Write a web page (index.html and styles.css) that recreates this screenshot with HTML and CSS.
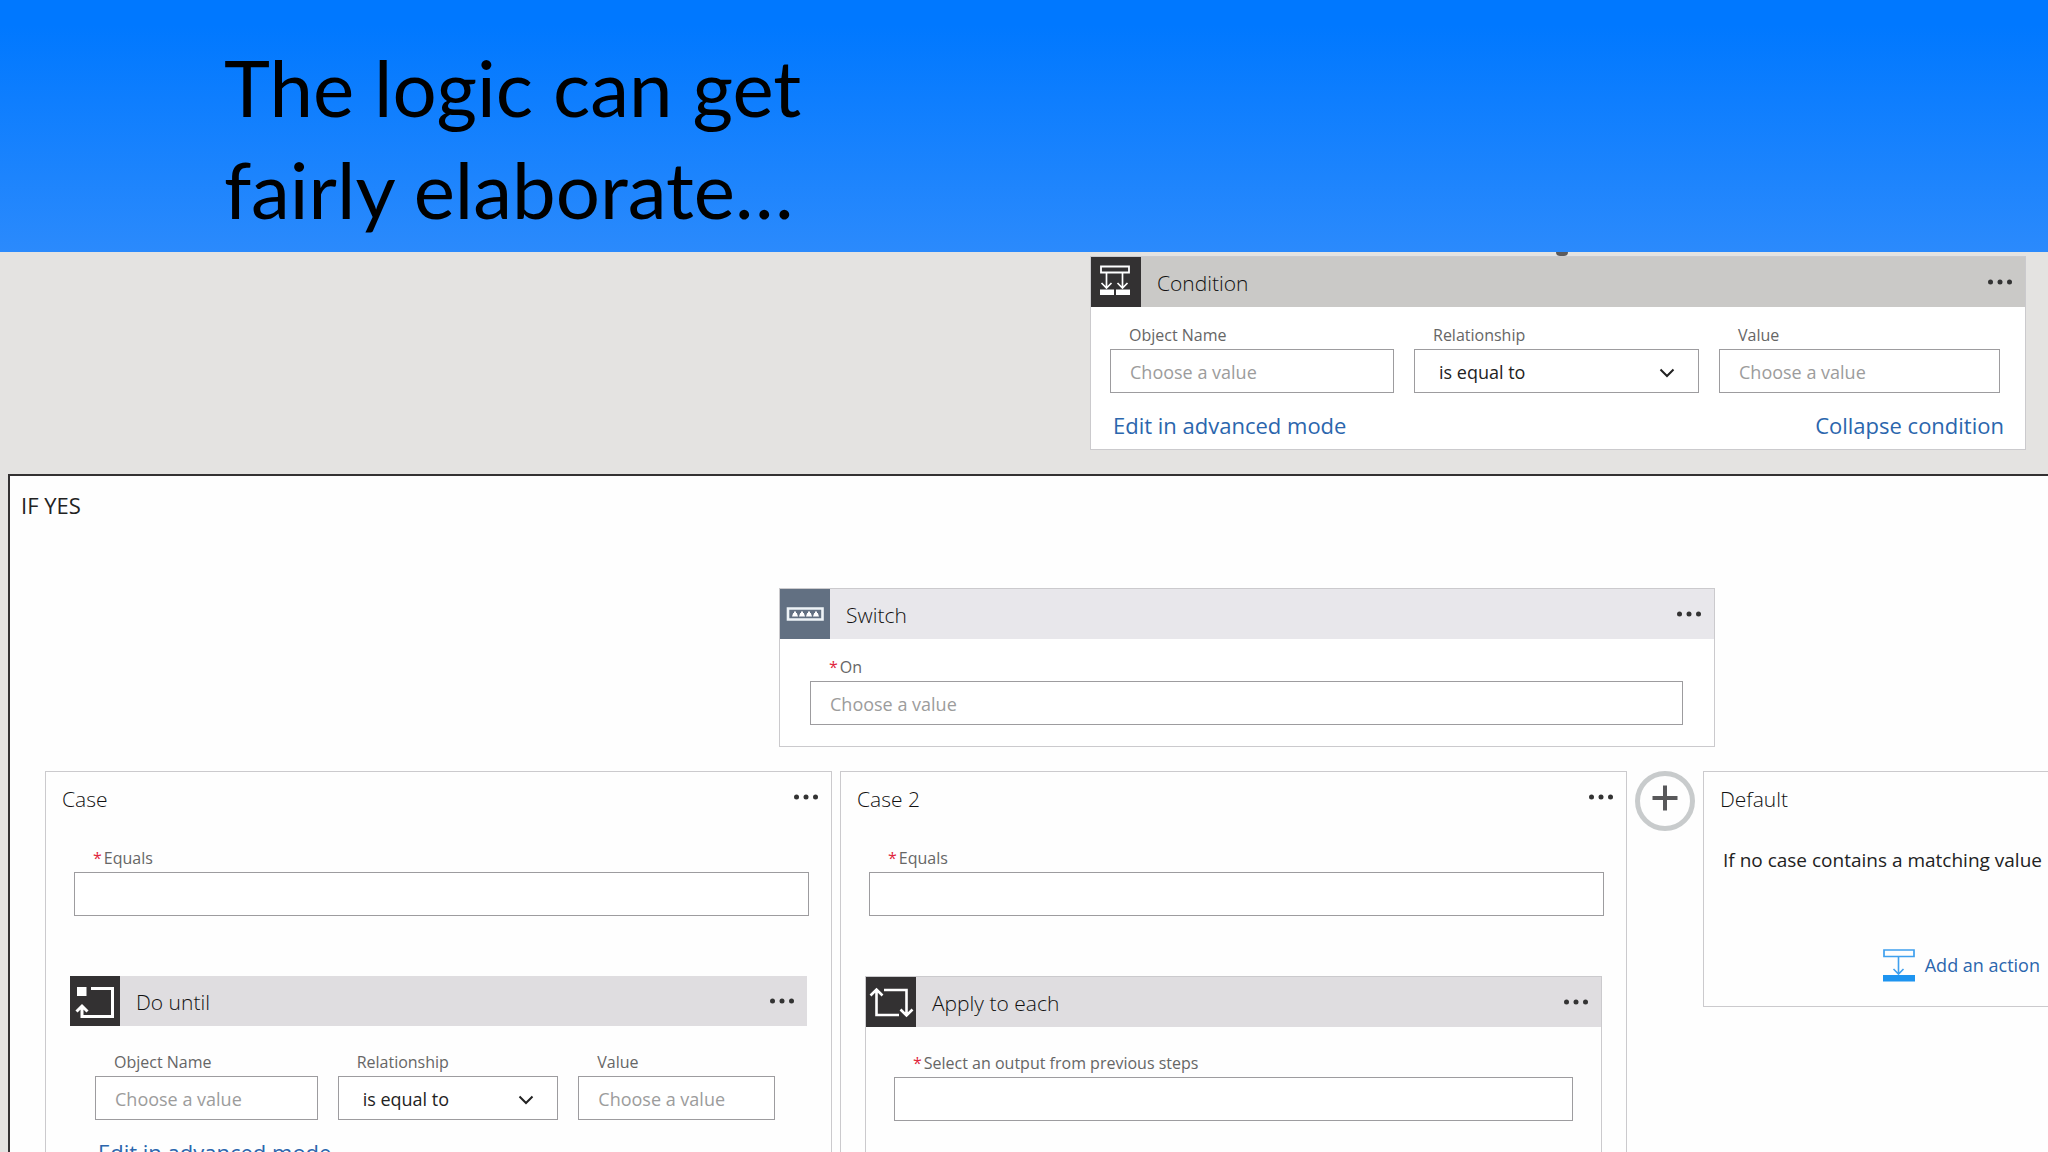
FILE: index.html
```html
<!DOCTYPE html>
<html lang="en">
<head>
<meta charset="utf-8">
<title>The logic can get fairly elaborate…</title>
<link rel="stylesheet" href="styles.css">
</head>
<body>
<svg class="sprite" aria-hidden="true">
  <symbol id="dots" viewBox="0 0 26 8"><circle cx="3.5" cy="4" r="2.5"/><circle cx="13" cy="4" r="2.5"/><circle cx="22.5" cy="4" r="2.5"/></symbol>
  <symbol id="chevron" viewBox="0 0 16 10"><path d="M1.5 1.5 8 8l6.500-6.500" fill="none" stroke="#222" stroke-width="2"/></symbol>
</svg>

<header class="banner">
  <h1 class="banner-title">The logic can get<br>fairly elaborate…</h1>
</header>

<main class="canvas">
  <section class="card condition">
    <div class="card-head head-condition">
      <span class="badge badge-dark">
        <svg width="50" height="50" viewBox="0 0 50 50" fill="none" stroke="#fff"><path d="M10 9.500h28v6H10z" stroke-width="1.800"/><path d="M15.500 16v14M31.500 16v14M10.500 26l5 5 5-5M26.500 26l5 5 5-5" stroke-width="1.700"/><path d="M9 32.500h14V38H9zM25 32.500h14V38H25z" fill="#fff" stroke="none"/></svg>
      </span>
      <h2 class="title">Condition</h2>
      <button class="more" aria-label="Condition menu"><svg width="26" height="8"><use href="#dots"/></svg></button>
    </div>
    <div class="card-body">
      <div class="fields">
        <div class="field"><label for="c-obj">Object Name</label><input id="c-obj" placeholder="Choose a value"></div>
        <div class="field"><label for="c-rel">Relationship</label><div class="pick"><select id="c-rel"><option>is equal to</option></select><svg class="arrow" width="16" height="10"><use href="#chevron"/></svg></div></div>
        <div class="field"><label for="c-val">Value</label><input id="c-val" placeholder="Choose a value"></div>
      </div>
      <div class="links"><a href="#">Edit in advanced mode</a><a href="#">Collapse condition</a></div>
    </div>
  </section>

  <section class="branch">
    <h2 class="branch-title">IF YES</h2>

    <section class="card switch">
      <div class="card-head head-switch">
        <span class="badge badge-slate">
          <svg width="50" height="50" viewBox="0 0 50 50"><path d="M8 19.500h34.500v11H8z" fill="none" stroke="#eef3f7" stroke-width="2.600"/><path d="M12 27.500l1.200-3.500h.8v-1.500h2V24h.8l1.200 3.500zM19 27.500l1.200-3.500h.8v-1.500h2V24h.8l1.200 3.500zM26 27.500l1.200-3.500h.8v-1.500h2V24h.8l1.200 3.500zM33 27.500l1.200-3.500h.8v-1.500h2V24h.8l1.200 3.500z" fill="#fff"/></svg>
        </span>
        <h3 class="title">Switch</h3>
        <button class="more" aria-label="Switch menu"><svg width="26" height="8"><use href="#dots"/></svg></button>
      </div>
      <div class="switch-body">
        <div class="field"><label for="s-on"><span class="req">*</span>On</label><input id="s-on" placeholder="Choose a value"></div>
      </div>
    </section>

    <div class="lanes">
      <section class="lane">
        <div class="lane-head">
          <h3 class="title">Case</h3>
          <button class="more" aria-label="Case menu"><svg width="26" height="8"><use href="#dots"/></svg></button>
        </div>
        <div class="field equals"><label for="e-1"><span class="req">*</span>Equals</label><input id="e-1"></div>
        <section class="step">
          <div class="card-head head-step">
            <span class="badge badge-dark">
              <svg width="50" height="50" viewBox="0 0 50 50"><path d="M7 11h9.500v9H7z" fill="#fff"/><path d="M21 12.500h21.500v28H12V30M6.500 35.500l5.500-5.500 5.500 5.500" fill="none" stroke="#fff" stroke-width="3"/></svg>
            </span>
            <h4 class="title">Do until</h4>
            <button class="more" aria-label="Do until menu"><svg width="26" height="8"><use href="#dots"/></svg></button>
          </div>
          <div class="until-body">
            <div class="fields fields-until">
              <div class="field"><label for="u-obj">Object Name</label><input id="u-obj" placeholder="Choose a value"></div>
              <div class="field"><label for="u-rel">Relationship</label><div class="pick"><select id="u-rel"><option>is equal to</option></select><svg class="arrow" width="16" height="10"><use href="#chevron"/></svg></div></div>
              <div class="field"><label for="u-val">Value</label><input id="u-val" placeholder="Choose a value"></div>
            </div>
            <div class="links"><a href="#">Edit in advanced mode</a></div>
          </div>
        </section>
      </section>

      <section class="lane">
        <div class="lane-head">
          <h3 class="title">Case 2</h3>
          <button class="more" aria-label="Case 2 menu"><svg width="26" height="8"><use href="#dots"/></svg></button>
        </div>
        <div class="field equals"><label for="e-2"><span class="req">*</span>Equals</label><input id="e-2"></div>
        <section class="step step-outlined">
          <div class="card-head head-step">
            <span class="badge badge-dark">
              <svg width="50" height="50" viewBox="0 0 50 50" fill="none" stroke="#fff" stroke-width="2.600"><path d="M18 13h22.500v24M34.500 32.500l6 6 6-6M33 38H10.500V14M4.500 18.500l6-6 6 6"/></svg>
            </span>
            <h4 class="title">Apply to each</h4>
            <button class="more" aria-label="Apply to each menu"><svg width="26" height="8"><use href="#dots"/></svg></button>
          </div>
          <div class="each-body">
            <div class="field"><label for="a-out"><span class="req">*</span>Select an output from previous steps</label><input id="a-out"></div>
          </div>
        </section>
      </section>

      <button class="add-case" aria-label="Add case"><svg width="60" height="60" viewBox="0 0 60 60" fill="none"><circle cx="30" cy="30" r="27.500" stroke="#c8cbcc" stroke-width="5"/><path d="M17.500 27h25M30 14.500v25" stroke="#58585a" stroke-width="4"/></svg></button>

      <section class="lane lane-default">
        <div class="lane-head"><h3 class="title">Default</h3></div>
        <p class="note">If no case contains a matching value</p>
        <a class="add-action" href="#">
          <svg width="32" height="34" viewBox="0 0 32 34" fill="none" stroke="#3fa0ee"><path d="M1 2h30v6.500H1z" stroke-width="1.700"/><path d="M15.500 9v17M10.500 21l5 5 5-5" stroke-width="1.600"/><path d="M0 27h32v6.500H0z" fill="#1d94f0" stroke="none"/></svg>
          Add an action
        </a>
      </section>
    </div>
  </section>
</main>
</body>
</html>
```
FILE: styles.css
```css
* { box-sizing: border-box; }

body {
  margin: 0;
  height: 100vh;
  display: flex;
  flex-direction: column;
  overflow: hidden;
  background: #e4e3e1;
  color: #222;
  font-family: "Open Sans", "Noto Sans", sans-serif;
  font-size: 18px;
}

h1, h2, h3, h4, p { margin: 0; font-weight: 400; }
a { color: #2b66ad; text-decoration: none; }
button { padding: 0; border: 0; background: none; color: inherit; font: inherit; }
svg { display: block; }
.sprite { position: absolute; width: 0; height: 0; }

.banner {
  flex: none;
  padding: 36px 224px 12px;
  background: linear-gradient(#0078ff 10%, #2b8afc);
}
.banner-title {
  color: #000;
  font: 400 78px/102px Lato, sans-serif;
}

.canvas {
  flex: 1;
  min-height: 0;
  display: flex;
  flex-direction: column;
  padding: 4px 0 0 8px;
}

.card {
  width: 936px;
  max-width: 100%;
  border: 1px solid #cbcacd;
  background: #fff;
}
.card-head {
  display: flex;
  align-items: center;
  height: 50px;
  padding-right: 12px;
}
.head-condition { background: #cac9c7; }
.head-switch { background: #e8e7eb; }
.head-step { background: #dfdde0; }
.badge { flex: none; width: 50px; height: 50px; margin-right: 16px; }
.badge-dark { background: #333132; }
.badge-slate { background: #627082; }
.title { flex: 1; padding-top: 2px; font-size: 21px; font-weight: 300; line-height: 30px; color: #111; }
.more { flex: none; fill: #333; }

/* Stub of the incoming connector above the condition */
.condition { position: relative; flex: none; align-self: flex-end; margin-right: 22px; }
.condition::before {
  content: "";
  position: absolute;
  top: -5px;
  left: 465px;
  width: 12px;
  height: 4px;
  border-radius: 0 0 6px 6px;
  background: #5c5b5c;
}

.card-body { padding: 16px 25px 9px 19px; }
.fields { display: grid; grid-template-columns: 284fr 285fr 281fr; gap: 20px; }
.fields-until { grid-template-columns: 223fr 221fr 197fr; }
.field { display: flex; flex-direction: column; gap: 2px; min-width: 0; }
.field label { padding-left: 19px; font-size: 16px; line-height: 24px; color: #666; }
.req { margin-right: 2px; color: #e0263c; }

input, select {
  width: 100%;
  height: 44px;
  padding: 2px 19px 0;
  border: 1px solid #9d9c9f;
  border-radius: 0;
  background: #fff;
  color: #222;
  font: inherit;
}
input::placeholder { color: #9c9c9c; opacity: 1; }
select { appearance: none; padding-left: 24px; }
.pick { position: relative; }
.arrow { position: absolute; top: 19px; right: 24px; pointer-events: none; }

.links {
  display: flex;
  justify-content: space-between;
  margin: 17px -4px 0 3px;
  font-size: 22px;
  line-height: 30px;
}

.branch {
  flex: 1;
  min-height: 0;
  margin-top: 24px;
  border: solid #333132;
  border-width: 2px 0 0 2px;
  background: #fefefe;
  overflow: hidden;
}
.branch-title { padding: 14px 11px 0; font-size: 22px; line-height: 30px; }

.switch { margin: 68px 333px 24px auto; }
.switch-body { padding: 16px 31px 21px 30px; }

.lanes {
  display: grid;
  grid-template-columns: 1fr 1fr 60px 345px;
  gap: 8px;
  align-items: start;
  padding-left: 35px;
}
.lane { min-width: 0; padding-bottom: 60px; border: 1px solid #cbcacd; background: #fefefe; }
.lane-head { display: flex; align-items: center; height: 50px; padding: 0 12px 0 16px; }
.lane-head .title { padding-top: 4px; }
.equals { padding: 24px 22px 0 28px; }
.step { margin: 60px 24px 0; background: #fefefe; }
.step-outlined { border: 1px solid #cbcacd; }
.until-body { padding: 24px 32px 24px 25px; }
.each-body { padding: 24px 28px 60px; }

.lane-default { padding-bottom: 24px; border-right: 0; }
.note { padding: 23px 0 0 19px; font-size: 19px; line-height: 30px; white-space: nowrap; }
.add-action {
  display: flex;
  align-items: center;
  justify-content: flex-end;
  gap: 10px;
  margin: 73px 8px 0 0;
}
```
